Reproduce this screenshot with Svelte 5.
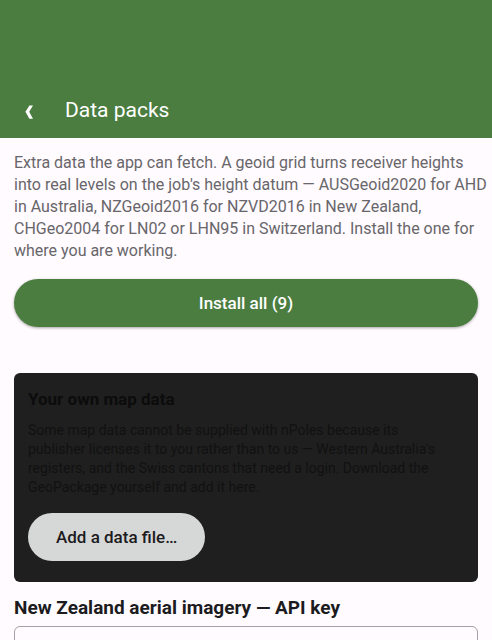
<script>
	let packs = $state(9);
	let apiKey = $state('');
</script>

<div class="page">
	<header>
		<button class="back" aria-label="Back">
			<svg viewBox="0 0 10 16" width="10" height="16" aria-hidden="true">
				<path
					d="M5.4 1.4H9L5.2 7.8L9 14.8H5.4L1.4 7.8Z"
					fill="currentColor"
				/>
			</svg>
		</button>
		<h1>Data packs</h1>
	</header>

	<main>
		<p class="intro">
			Extra data the app can fetch. A geoid grid turns receiver heights into real levels on the
			job's height datum — AUSGeoid2020 for AHD in Australia, NZGeoid2016 for NZVD2016 in New
			Zealand, CHGeo2004 for LN02 or LHN95 in Switzerland. Install the one for where you are
			working.
		</p>
		<button class="install">Install all ({packs})</button>

		<section class="card">
			<h2>Your own map data</h2>
			<p>
				Some map data cannot be supplied with nPoles because its publisher licenses it to you
				rather than to us — Western Australia's registers, and the Swiss cantons that need a
				login. Download the GeoPackage yourself and add it here.
			</p>
			<button class="add">Add a data file…</button>
		</section>

		<label for="api-key">New Zealand aerial imagery — API key</label>
		<input id="api-key" type="text" bind:value={apiKey} />
	</main>
</div>

<style>
	:global(html) {
		scrollbar-width: none;
	}
	:global(body) {
		margin: 0;
		background: #fffbff;
	}
	.page {
		font-family: Roboto, 'Liberation Sans', sans-serif;
		color: #1c1b1e;
	}
	header {
		display: flex;
		align-items: center;
		padding: 82px 14px 0;
		height: 56px;
		background: #4a7d3f;
		color: #fff;
	}
	button {
		font-family: inherit;
		border: none;
		cursor: pointer;
	}
	.back {
		display: flex;
		align-items: center;
		justify-content: center;
		width: 30px;
		height: 48px;
		margin-right: 21px;
		padding: 4px 0 0;
		background: none;
		color: inherit;
	}
	h1 {
		margin: 0;
		font-size: 21px;
		font-weight: 400;
	}
	main {
		display: flex;
		flex-direction: column;
		padding: 14px 14px 24px;
	}
	.intro {
		margin: 0 -12px 17px 0;
		font-size: 16px;
		line-height: 22px;
		color: #68666a;
	}
	.install {
		height: 48px;
		border-radius: 24px;
		background: #4a7d3f;
		color: #fff;
		font-size: 17px;
		font-weight: 500;
		box-shadow: 0 1px 3px rgba(0, 0, 0, 0.35);
	}
	.card {
		margin: 46px 0 14px;
		padding: 14px 14px 21px;
		border-radius: 6px;
		background: #1f1f1f;
		color: #0c0c0c;
	}
	.card h2 {
		margin: 0 0 10px;
		font-size: 17px;
		line-height: 24px;
		font-weight: 700;
	}
	.card p {
		margin: 0 0 16px;
		padding-right: 20px;
		font-size: 14px;
		line-height: 19px;
		color: #111;
	}
	.add {
		height: 48px;
		padding: 0 28px;
		border-radius: 24px;
		background: #d6d8d7;
		color: #1c1b1e;
		font-size: 17px;
		font-weight: 500;
	}
	label {
		margin-bottom: 6px;
		font-size: 19px;
		line-height: 24px;
		font-weight: 700;
	}
	input {
		box-sizing: border-box;
		height: 52px;
		padding: 0 14px;
		border: 1px solid #a3a1a5;
		border-radius: 6px;
		background: #fffbff;
		font: inherit;
	}
</style>
